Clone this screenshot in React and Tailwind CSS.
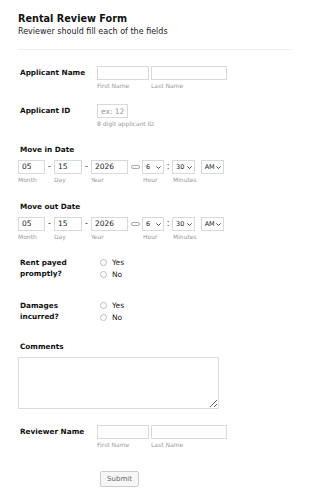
import React from "react";

const font = { fontFamily: '"DejaVu Sans", Verdana, sans-serif' };

function Sub({ children, className = "" }) {
  return <div className={"text-[6px] text-[#999] leading-[6px] mt-[3px] whitespace-nowrap " + className}>{children}</div>;
}

function Label({ children, className = "" }) {
  return <div className={"text-[7.3px] font-bold text-[#111] leading-[11px] " + className}>{children}</div>;
}

function Input({ className = "", value, placeholder }) {
  return (
    <input
      readOnly
      defaultValue={value}
      placeholder={placeholder}
      className={"block h-[14px] border border-[#d9d9d9] bg-white px-[3px] text-[7.5px] text-[#222] outline-none placeholder:text-[#999] " + className}
      style={font}
    />
  );
}

function Select({ value, className = "" }) {
  return (
    <div className={"h-[14px] border border-[#d9d9d9] bg-white flex items-center justify-between pl-[3px] pr-[2px] text-[6.5px] leading-none text-[#222] " + className}>
      <span>{value}</span>
      <svg width="5" height="3" viewBox="0 0 5 3"><path d="M0.4 0.4 L2.5 2.5 L4.6 0.4" fill="none" stroke="#333" strokeWidth="0.9" /></svg>
    </div>
  );
}

function NameRow({ label }) {
  return (
    <div className="flex">
      <Label className="w-[77px] pt-[1px]">{label}</Label>
      <div>
        <Input className="w-[52px]" />
        <Sub>First Name</Sub>
      </div>
      <div className="ml-[2px]">
        <Input className="w-[76px]" />
        <Sub>Last Name</Sub>
      </div>
    </div>
  );
}

function DateRow({ label }) {
  return (
    <div>
      <Label className="pl-[2px]">{label}</Label>
      <div className="flex mt-[5px] text-[8px] leading-[14px] text-[#333]">
        <div>
          <Input className="w-[27px]" value="05" />
          <Sub>Month</Sub>
        </div>
        <span className="w-[9px] text-center">-</span>
        <div>
          <Input className="w-[28px]" value="15" />
          <Sub>Day</Sub>
        </div>
        <span className="w-[9px] text-center">-</span>
        <div>
          <Input className="w-[37px]" value="2026" />
          <Sub>Year</Sub>
        </div>
        <div className="w-[14px] flex items-center justify-center h-[14px]">
          <div className="w-[9px] h-[4px] rounded-full border border-[#aaa]" />
        </div>
        <div>
          <Select className="w-[22px]" value="6" />
          <Sub className="pl-[1px]">Hour</Sub>
        </div>
        <span className="w-[8px] text-center">:</span>
        <div>
          <Select className="w-[23px]" value="30" />
          <Sub className="pl-[1px]">Minutes</Sub>
        </div>
        <div className="ml-[4px]">
          <Select className="w-[23px]" value="AM" />
        </div>
      </div>
    </div>
  );
}

function Radio({ label }) {
  return (
    <div className="flex items-center h-[12.5px] text-[7.5px] text-[#222]">
      <span className="w-[7px] h-[7px] rounded-full border border-[#bbb] bg-white mr-[5px]" />
      {label}
    </div>
  );
}

function RadioRow({ l1, l2 }) {
  return (
    <div className="flex">
      <Label className="w-[80px] pt-[1px]">
        {l1}
        <br />
        {l2}
      </Label>
      <div>
        <Radio label="Yes" />
        <Radio label="No" />
      </div>
    </div>
  );
}

export default function App() {
  return (
    <div className="w-[310px] h-[499px] bg-white overflow-hidden text-[8px] leading-[11px]" style={font}>
      <div className="pl-[18px] pr-[19px] pt-[12px]">
        <div className="text-[9.7px] font-bold text-[#111] leading-[13px]">Rental Review Form</div>
        <div className="text-[8px] text-[#222] leading-[11px] mt-[1px]">Reviewer should fill each of the fields</div>
        <div className="border-t border-[#eee] mt-[12px]" />
        <div className="pl-[2px] mt-[16px]">
          <NameRow label="Applicant Name" />
        </div>
        <div className="flex pl-[2px] mt-[15px]">
          <Label className="w-[77px] pt-[1px]">Applicant ID</Label>
          <div>
            <Input className="w-[31px]" placeholder="ex: 123" />
            <Sub>8 digit applicant ID</Sub>
          </div>
        </div>
        <div className="mt-[17px]">
          <DateRow label="Move in Date" />
        </div>
        <div className="mt-[18px]">
          <DateRow label="Move out Date" />
        </div>
        <div className="pl-[2px] mt-[16px]">
          <RadioRow l1="Rent payed" l2="promptly?" />
        </div>
        <div className="pl-[2px] mt-[18px]">
          <RadioRow l1="Damages" l2="incurred?" />
        </div>
        <div className="pl-[2px] mt-[17px]">
          <Label>Comments</Label>
        </div>
        <textarea readOnly className="block mt-[5px] w-[201px] h-[52px] border border-[#ddd] resize-y" />
        <div className="pl-[2px] mt-[16px]">
          <NameRow label="Reviewer Name" />
        </div>
        <div className="pl-[82px] mt-[23px]">
          <button className="block h-[16px] w-[39px] border border-[#ccc] rounded-[2px] bg-[#f7f7f7] text-[7px] leading-none text-[#666]" style={font}>Submit</button>
        </div>
      </div>
    </div>
  );
}
